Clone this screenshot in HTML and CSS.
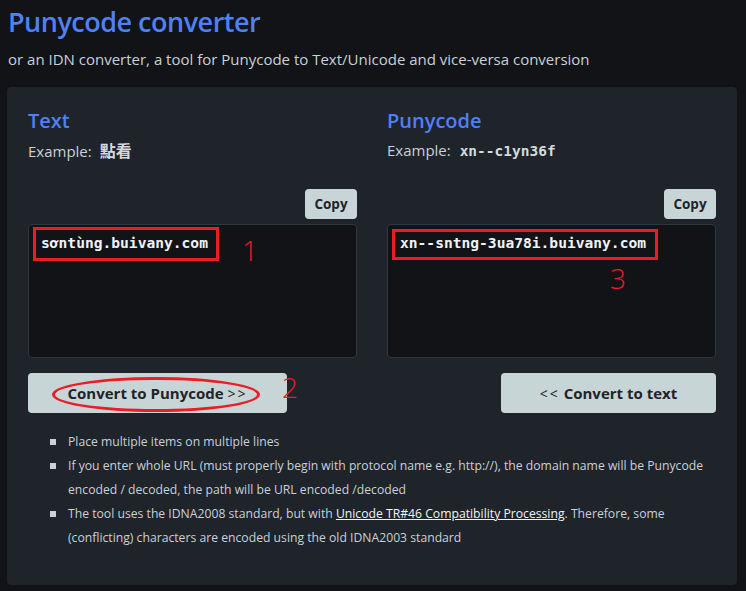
FILE: index.html
```html
<!DOCTYPE html>
<html lang="en">
<head>
<meta charset="utf-8">
<title>Punycode converter</title>
<link rel="stylesheet" href="styles.css">
</head>
<body>
<main class="page">
  <h1 class="title">Punycode converter</h1>
  <p class="subtitle">or an IDN converter, a tool for Punycode to Text/Unicode and vice-versa conversion</p>
  <section class="panel">
    <div class="cols">
      <div class="col">
        <h2 class="col-title">Text</h2>
        <p class="example">Example: <span class="ex-cjk">點看</span></p>
        <div class="copy-row"><button class="btn copy">Copy</button></div>
        <div class="box">
          <div class="box-text">sơntùng.buivany.com</div>
          <span class="mark mark-left"></span>
          <span class="num num-1">1</span>
        </div>
        <div class="action-row">
          <button class="btn convert convert-puny">Convert to Punycode <span class="arr">&gt;&gt;</span><span class="ellipse"></span></button>
          <span class="num num-2">2</span>
        </div>
      </div>
      <div class="col">
        <h2 class="col-title">Punycode</h2>
        <p class="example">Example: <span class="ex-mono">xn--c1yn36f</span></p>
        <div class="copy-row"><button class="btn copy">Copy</button></div>
        <div class="box">
          <div class="box-text">xn--sntng-3ua78i.buivany.com</div>
          <span class="mark mark-right"></span>
          <span class="num num-3">3</span>
        </div>
        <div class="action-row end">
          <button class="btn convert convert-text"><span class="arr">&lt;&lt;</span> Convert to text</button>
        </div>
      </div>
    </div>
    <ul class="notes">
      <li>Place multiple items on multiple lines</li>
      <li>If you enter whole URL (must properly begin with protocol name e.g. http://), the domain name will be Punycode encoded / decoded, the path will be URL encoded /decoded</li>
      <li>The tool uses the IDNA2008 standard, but with <a href="#">Unicode TR#46 Compatibility Processing</a>. Therefore, some (conflicting) characters are encoded using the old IDNA2003 standard</li>
    </ul>
  </section>
</main>
</body>
</html>
```
FILE: styles.css
```css
* { box-sizing: border-box; }
html, body { margin: 0; padding: 0; }
body {
  background: #111317;
  color: #c9d1d9;
  font-family: "Open Sans", "Noto Sans", sans-serif;
}
.page {
  padding: 5px 9px 0 7px;
}
.title {
  margin: 0 0 0 1px;
  font-size: 27px;
  line-height: 34px;
  font-weight: 600;
  letter-spacing: -0.5px;
  color: #5080f5;
}
.subtitle {
  margin: 9px 0 0 1px;
  font-size: 15px;
  line-height: 22px;
  color: #c9d1d9;
}
.panel {
  margin-top: 17px;
  background: #1f232a;
  border-radius: 4px;
  padding: 22px 21px 35px;
}
.cols {
  display: grid;
  grid-template-columns: 1fr 1fr;
  column-gap: 30px;
}
.col { display: flex; flex-direction: column; }
.col-title {
  margin: 0;
  font-size: 20px;
  line-height: 24px;
  font-weight: 600;
  color: #5080f5;
}
.example {
  margin: 6px 0 0;
  font-size: 15px;
  line-height: 22px;
  color: #c9d1d9;
}
.ex-cjk {
  font-family: "Noto Sans CJK TC", sans-serif;
  font-weight: 700;
  font-size: 16px;
  margin-left: 4px;
  color: #d4dadf;
}
.ex-mono {
  font-family: "DejaVu Sans Mono", monospace;
  font-weight: 700;
  font-size: 14.5px;
  margin-left: 5px;
  color: #d4dadf;
}
.copy-row {
  display: flex;
  justify-content: flex-end;
  margin-top: 27px;
}
.btn {
  font-family: "Open Sans", sans-serif;
  background: #c8d5d7;
  color: #1f232a;
  border: 0;
  border-radius: 4px;
  font-weight: 700;
  cursor: pointer;
}
.copy {
  width: 52px;
  height: 30px;
  font-size: 13.5px;
  padding: 0;
}
.box {
  position: relative;
  margin-top: 5px;
  height: 134px;
  background: #111317;
  border: 1px solid #30363d;
  border-radius: 4px;
  padding: 8px 12px;
}
.box-text {
  font-family: "DejaVu Sans Mono", monospace;
  font-weight: 700;
  font-size: 14.6px;
  line-height: 20px;
  color: #f0f3f6;
}
.mark {
  position: absolute;
  border: 3px solid #ea1c24;
}
.mark-left { left: 4px; top: 2px; width: 186px; height: 34px; }
.mark-right { left: 4px; top: 4px; width: 266px; height: 31px; }
.num {
  position: absolute;
  font-family: "Open Sans", sans-serif;
  font-size: 28px;
  line-height: 28px;
  font-weight: 300;
  color: #ea1c24;
}
.num-1 { left: 213px; top: 11px; }
.num-3 { left: 222px; top: 39px; }
.action-row {
  position: relative;
  display: flex;
  margin-top: 15px;
}
.action-row.end { justify-content: flex-end; }
.convert {
  position: relative;
  height: 40px;
  font-size: 15px;
  padding: 0;
}
.convert-puny { width: 259px; }
.convert-text { width: 215px; }
.arr {
  font-weight: 400;
  font-size: 14px;
  letter-spacing: 2px;
}
.ellipse {
  position: absolute;
  left: 24px;
  top: 4px;
  width: 208px;
  height: 35px;
  border: 3px solid #ea1c24;
  border-radius: 50%;
}
.num-2 { left: 254px; top: 0; }
.notes {
  list-style: none;
  margin: 17px 0 0;
  padding: 0 0 0 40px;
  font-size: 12.2px;
  line-height: 24px;
  color: #c9d1d9;
}
.notes li { position: relative; }
.notes li::before {
  content: "";
  position: absolute;
  left: -18px;
  top: 9px;
  width: 6px;
  height: 6px;
  background: #c9d1d9;
}
.notes a {
  color: #f0f3f6;
  text-decoration: underline;
}
```
